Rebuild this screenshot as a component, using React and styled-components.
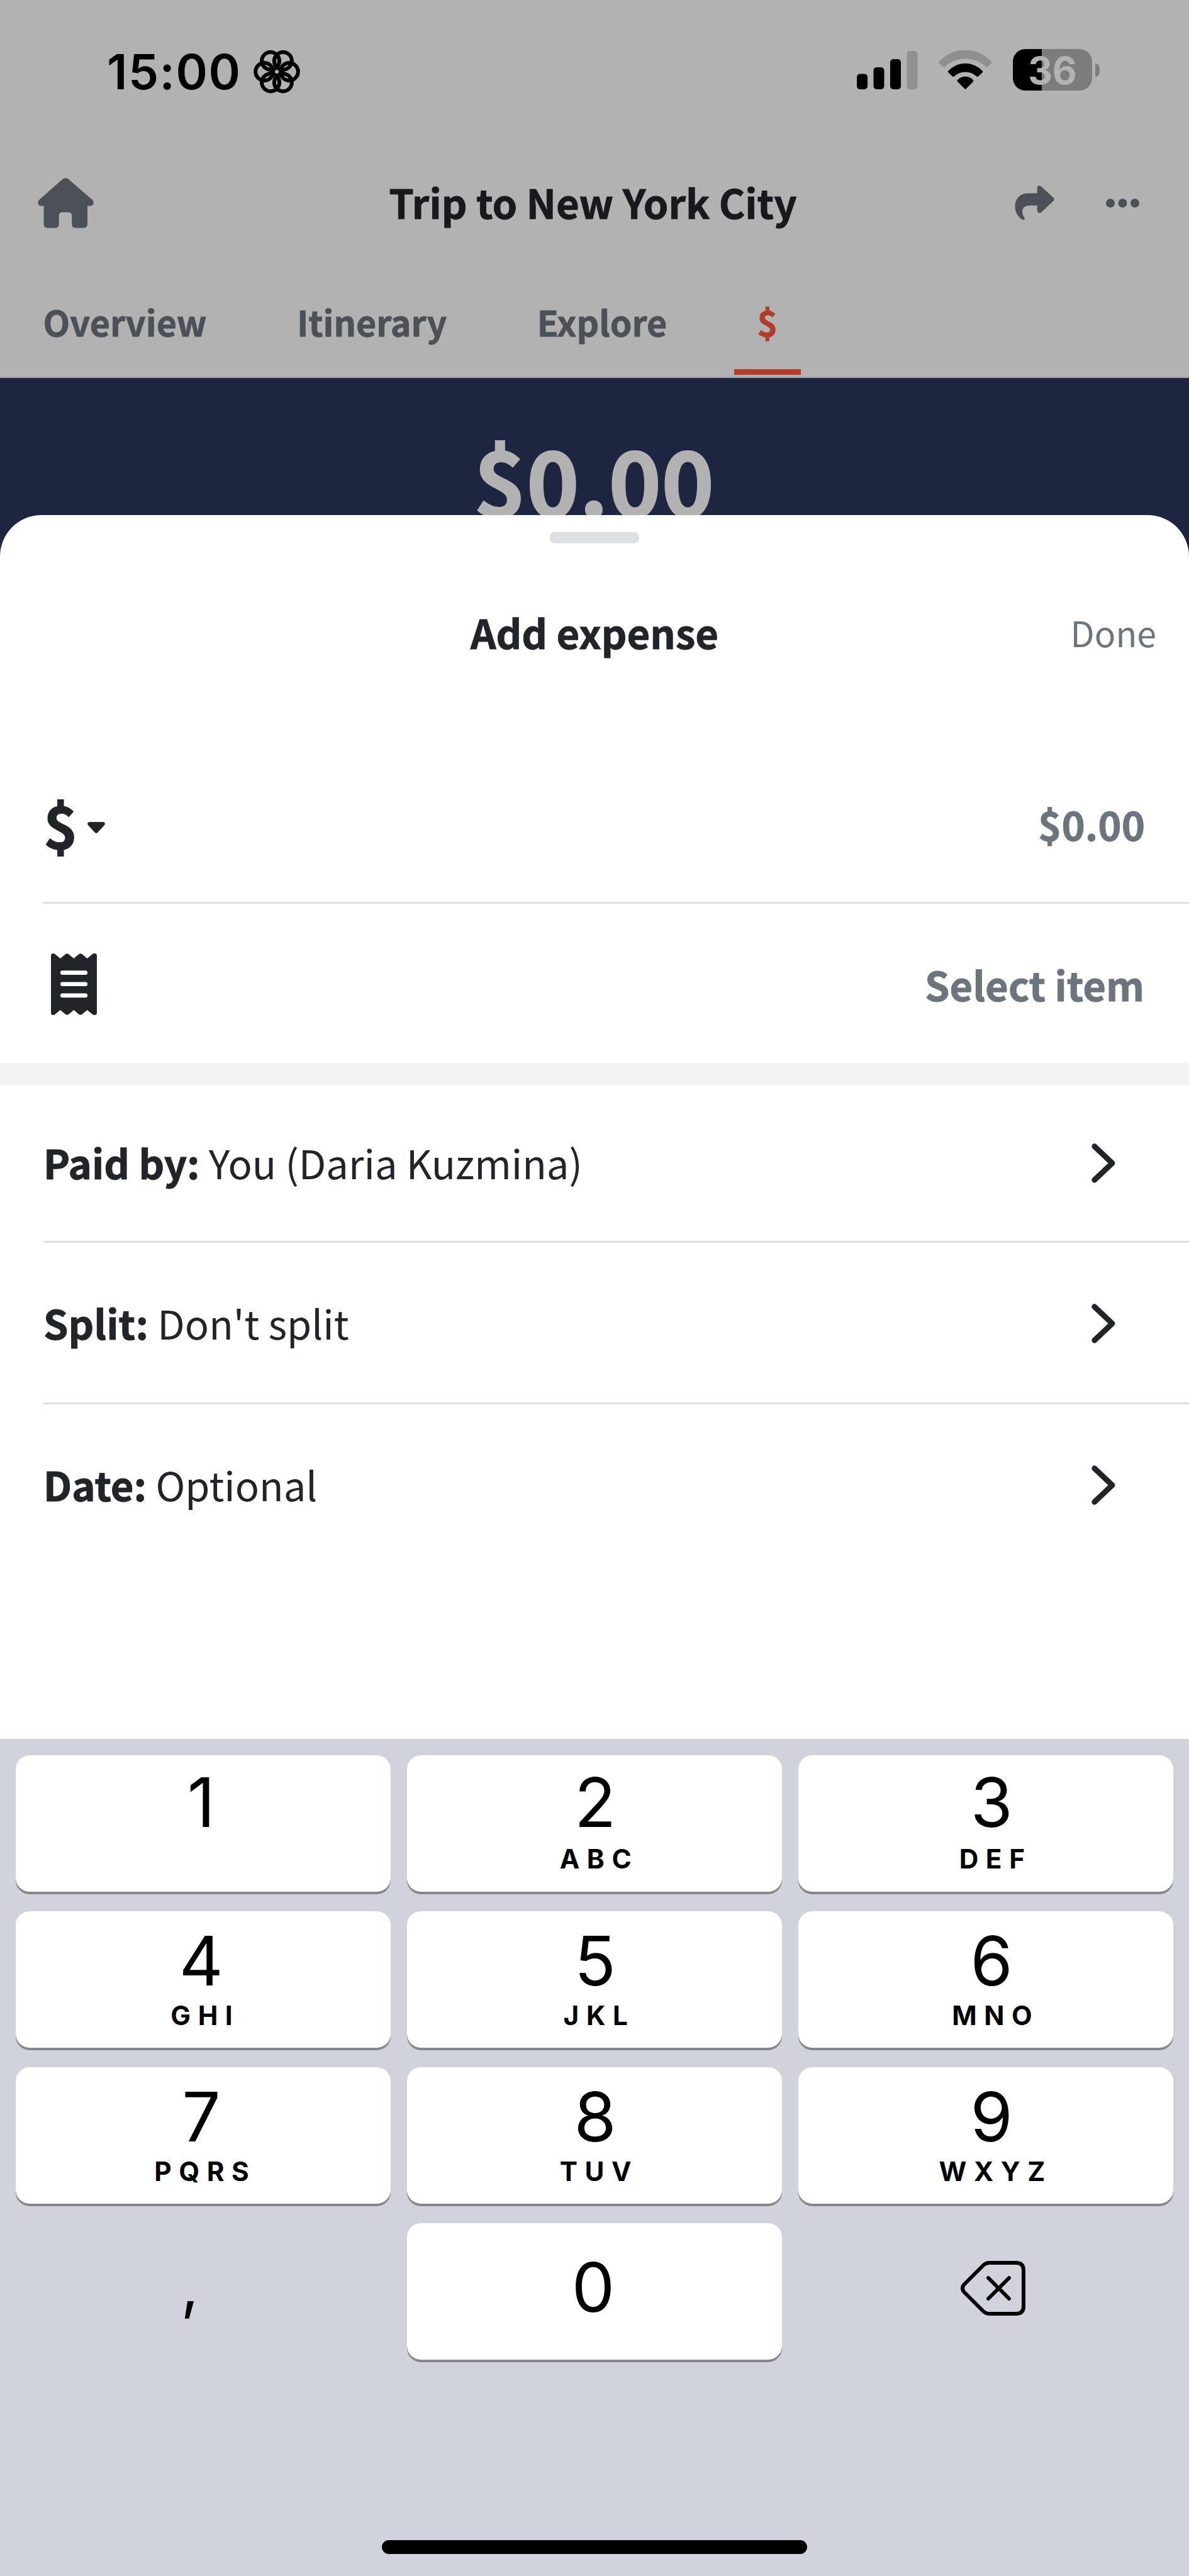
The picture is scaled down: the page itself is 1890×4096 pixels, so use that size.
import React from 'react';
import styled, { createGlobalStyle } from 'styled-components';

const COLOR = {
	dimmed: '#b2b2b2',
	dimmedIcon: '#4b5157',
	dimmedTitle: '#17191c',
	dimmedAccent: '#b03c29',
	navy: '#1e2541',
	text: '#212529',
	muted: '#6c757d',
	line: '#dddee2',
	band: '#f2f3f4',
	keyboard: '#d0d3db',
	keyShadow: '#85878b',
};

const FONT = {
	app: "'Noto Sans CJK JP', 'Noto Sans', sans-serif",
	system: "Inter, 'Liberation Sans', sans-serif",
};

const tabs = ['Overview', 'Itinerary', 'Explore', '$'];

const details = [
	{ label: 'Paid by:', value: 'You (Daria Kuzmina)' },
	{ label: 'Split:', value: "Don't split" },
	{ label: 'Date:', value: 'Optional' },
];

const keys = [
	{ digit: '1', letters: '' },
	{ digit: '2', letters: 'ABC' },
	{ digit: '3', letters: 'DEF' },
	{ digit: '4', letters: 'GHI' },
	{ digit: '5', letters: 'JKL' },
	{ digit: '6', letters: 'MNO' },
	{ digit: '7', letters: 'PQRS' },
	{ digit: '8', letters: 'TUV' },
	{ digit: '9', letters: 'WXYZ' },
];

// optical shift of the labels in each keypad column
const columnShift = [-3, 1, 9];

const App = () => {
	return (
		<>
			<GlobalStyle />
			<Screen>
				<StatusBar>
					<Clock>
						<span>15:00</span>
						<FocusIcon />
					</Clock>
					<Indicators>
						<SignalIcon />
						<WifiIcon />
						<Battery>
							<BatteryBody>36</BatteryBody>
							<BatteryNub />
						</Battery>
					</Indicators>
				</StatusBar>
				<NavBar>
					<HomeIcon />
					<NavTitle>Trip to New York City</NavTitle>
					<NavActions>
						<ShareIcon />
						<MoreIcon />
					</NavActions>
				</NavBar>
				<Tabs>
					{tabs.map((tab) => (
						<Tab key={tab} $active={tab === '$'}>
							{tab}
						</Tab>
					))}
				</Tabs>
				<Hero>$0.00</Hero>
				<Sheet>
					<Handle />
					<SheetHeader>
						<SheetTitle>Add expense</SheetTitle>
						<DoneButton>Done</DoneButton>
					</SheetHeader>
					<AmountRow>
						<Currency>
							$
							<CaretIcon />
						</Currency>
						<Placeholder>$0.00</Placeholder>
					</AmountRow>
					<ItemRow>
						<ReceiptIcon />
						<Placeholder>Select item</Placeholder>
					</ItemRow>
					<Band />
					{details.map(({ label, value }, index) => (
						<DetailRow key={label} $first={index === 0} $last={index === details.length - 1}>
							<p>
								<b>{label}</b> {value}
							</p>
							<ChevronIcon />
						</DetailRow>
					))}
				</Sheet>
				<Keyboard>
					<Keypad>
						{keys.map(({ digit, letters }, index) => (
							<Key key={digit} $top={index < 3 ? 21 : 25} $shift={columnShift[index % 3]}>
								<Digit>{digit}</Digit>
								<Letters $gap={index < 3 ? 14 : 11}>{letters}</Letters>
							</Key>
						))}
						<PlainKey $shift={-21}>
							<Comma>,</Comma>
						</PlainKey>
						<Key $top={48} $shift={-2}>
							<Digit>0</Digit>
						</Key>
						<PlainKey $shift={11}>
							<BackspaceIcon />
						</PlainKey>
					</Keypad>
					<HomeIndicator />
				</Keyboard>
			</Screen>
		</>
	);
};

export default App;

const FocusIcon = () => {
	return (
		<svg width="74" height="74" viewBox="-37 -37 74 74" fill="none" stroke="#000" strokeWidth="6">
			{[0, 60, 120, 180, 240, 300].map((angle) => (
				<circle key={angle} cx="19.8" cy="0" r="14" transform={`rotate(${angle})`} />
			))}
		</svg>
	);
};

const SignalIcon = () => {
	return (
		<svg width="97" height="61" viewBox="0 0 97 61">
			<rect x="0" y="36.6" width="17" height="24.4" rx="5" />
			<rect x="26.5" y="26" width="17" height="35" rx="5" />
			<rect x="53" y="13" width="17" height="48" rx="5" />
			<rect x="79.5" y="0" width="17" height="61" rx="5" fill="#909090" />
		</svg>
	);
};

const WifiIcon = () => {
	return (
		<svg width="85" height="62" viewBox="20 58 316 232">
			<path
				fill="#8f8f8f"
				d="M22 126A209 209 0 0 1 334 126Q338 130 334 134L310 156Q306 160 301 156A181 181 0 0 0 55 156Q50 160 46 156L22 134Q18 130 22 126Z"
			/>
			<path d="M76 181A137 137 0 0 1 280 181Q284 185 280 190L254 213Q250 217 245 213A99 99 0 0 0 111 213Q106 217 102 213L76 190Q72 185 76 181Z" />
			<path d="M132 235A60 60 0 0 1 224 235Q228 240 224 245L182 287Q178 291 174 287L132 245Q128 240 132 235Z" />
		</svg>
	);
};

const HomeIcon = () => {
	return (
		<svg width="89" height="80" viewBox="0 0 89 80" fill={COLOR.dimmedIcon}>
			<path d="M39.5 2Q44.3 -2 49 2L86.5 34.5Q89.5 38 88.3 41.5Q87 44.5 83 44.5H79V73Q79 79.5 72.5 79.5H60.5Q54.2 79.5 54.2 73V60Q54.2 54.5 48.7 54.5H39.3Q33.7 54.5 33.7 60V73Q33.7 79.5 27.5 79.5H16Q9.6 79.5 9.6 73V44.5H6Q2 44.5 .7 41.5Q-.5 38 2.5 34.5Z" />
		</svg>
	);
};

const ShareIcon = () => {
	return (
		<svg width="63" height="55" viewBox="50 67 235 205" fill={COLOR.dimmedIcon}>
			<path d="M183 113V82Q183 71 193 68Q200 66 208 73L279 139Q288 148 279 158L208 225Q200 232 192 229Q183 226 183 216V185H140C110 185 95 200 95 222C95 238 101 246 107 257C113 268 102 275 93 268C66 250 52 222 52 190C52 145 84 113 130 113Z" />
		</svg>
	);
};

const MoreIcon = () => {
	return (
		<svg width="53" height="14" viewBox="0 0 53 14" fill={COLOR.dimmedIcon}>
			<circle cx="7" cy="7" r="7" />
			<circle cx="26.5" cy="7" r="7" />
			<circle cx="46" cy="7" r="7" />
		</svg>
	);
};

const CaretIcon = () => {
	return (
		<svg width="28" height="18" viewBox="0 0 28 18" fill={COLOR.text}>
			<path d="M3.5 0H24.5Q27 0 27.7 1.8Q28.3 3.6 26.8 5.2L16.5 16.5Q14 19 11.5 16.5L1.2 5.2Q-.3 3.6 .3 1.8Q1 0 3.5 0Z" />
		</svg>
	);
};

const ReceiptIcon = () => {
	return (
		<svg width="73" height="98" viewBox="0 0 73 98">
			<path
				fill={COLOR.text}
				d="M0 3.5Q0 0 3.8 0Q5.8 0 7 1.5L14.8 8L23 1.2Q25.6 -.8 28.2 1.2L36.3 8L44.3 1.2Q46.9 -.8 49.5 1.2L57.7 8L65.8 1.2Q67.3 0 69.2 0Q73 0 73 3.5V94.5Q73 98 69.2 98Q67.3 98 65.8 96.8L57.7 90L49.5 96.8Q46.9 98.8 44.3 96.8L36.3 90L28.2 96.8Q25.6 98.8 23 96.8L14.8 90L7 96.5Q5.8 98 3.8 98Q0 98 0 94.5Z"
			/>
			<g fill="#fff">
				<rect x="15" y="27.3" width="43" height="6.6" rx="3" />
				<rect x="15" y="45.5" width="43" height="6.6" rx="3" />
				<rect x="15" y="63.6" width="43" height="6.6" rx="3" />
			</g>
		</svg>
	);
};

const ChevronIcon = () => {
	return (
		<svg
			width="38"
			height="63"
			viewBox="0 0 38 63"
			fill="none"
			stroke={COLOR.text}
			strokeWidth="8.8"
			strokeLinecap="round"
			strokeLinejoin="round"
		>
			<path d="M4.7 4.7L33 31.5L4.7 58.3" />
		</svg>
	);
};

const BackspaceIcon = () => {
	return (
		<svg
			width="103"
			height="87"
			viewBox="0 0 103 87"
			fill="none"
			stroke="#000"
			strokeWidth="6"
			strokeLinecap="round"
			strokeLinejoin="round"
		>
			<path d="M46 3H88Q100 3 100 15V72Q100 84 88 84H46Q40 84 36 80L5.5 49.5Q.5 43.5 5.5 37.5L36 7Q40 3 46 3Z" />
			<path d="M44 27L77 60M77 27L44 60" />
		</svg>
	);
};

const GlobalStyle = createGlobalStyle`
	* {
		box-sizing: border-box;
	}

	body {
		margin: 0;
		background-color: ${COLOR.keyboard};
	}

	p,
	h1,
	h2 {
		margin: 0;
		font-weight: 700;
	}

	svg {
		display: block;
		flex-shrink: 0;
	}
`;

const Screen = styled.div`
	display: flex;
	flex-direction: column;
	width: 1890px;
	height: 4096px;
	overflow: hidden;
	background-color: ${COLOR.dimmed};
	font-family: ${FONT.app};
	color: ${COLOR.text};
`;

const StatusBar = styled.div`
	display: flex;
	justify-content: space-between;
	align-items: center;
	flex-shrink: 0;
	height: 227px;
	padding: 0 142px 0 170px;
	font-family: ${FONT.system};
	color: #000;
`;

const Clock = styled.div`
	display: flex;
	align-items: center;
	gap: 19px;
	font-size: 76.6px;
	font-weight: 600;
	line-height: 90px;
	letter-spacing: 1.5px;
`;

const Indicators = styled.div`
	display: flex;
	align-items: center;
	gap: 33px;
	margin-bottom: 5px;
`;

const Battery = styled.div`
	display: flex;
	align-items: center;
	gap: 4.5px;
`;

const BatteryBody = styled.div`
	width: 126px;
	height: 66px;
	padding-top: 1px;
	border-radius: 20px;
	background: linear-gradient(to right, #000 46px, #7c7c7c 46px);
	font-size: 60px;
	font-weight: 700;
	line-height: 66px;
	text-align: center;
	color: ${COLOR.dimmed};
`;

const BatteryNub = styled.div`
	width: 7.5px;
	height: 21px;
	border-radius: 0 8px 8px 0 / 0 10px 10px 0;
	background-color: #7c7c7c;
`;

const NavBar = styled.header`
	display: grid;
	grid-template-columns: 1fr auto 1fr;
	align-items: center;
	flex-shrink: 0;
	height: 186px;
	padding: 0 79px 0 60px;

	svg {
		margin-top: 5px;
	}
`;

const NavTitle = styled.h1`
	margin-right: -14px;
	font-size: 63.4px;
	line-height: 80px;
	color: ${COLOR.dimmedTitle};
	-webkit-text-stroke: 0.014em;
`;

const NavActions = styled.div`
	display: flex;
	justify-content: flex-end;
	align-items: center;
	gap: 82.5px;
`;

const Tabs = styled.nav`
	display: flex;
	gap: 70.5px;
	flex-shrink: 0;
	height: 188px;
	padding-left: 32px;
	border-bottom: 2px solid #a3a7ad;
`;

const Tab = styled.div`
	height: 183px;
	padding: 22px 36.4px 0;
	border-bottom: 9.5px solid ${({ $active }) => ($active ? COLOR.dimmedAccent : 'transparent')};
	font-size: 55.5px;
	font-weight: 700;
	line-height: 152px;
	color: ${({ $active }) => ($active ? COLOR.dimmedAccent : COLOR.dimmedIcon)};
	-webkit-text-stroke: 0.014em;
`;

const Hero = styled.div`
	flex-shrink: 0;
	height: 285px;
	padding: 60px 2px 0 0;
	background-color: ${COLOR.navy};
	font-size: 142.5px;
	font-weight: 700;
	line-height: 199px;
	text-align: center;
	color: ${COLOR.dimmed};
	-webkit-text-stroke: 0.014em;
`;

const Sheet = styled.main`
	display: flex;
	flex-direction: column;
	flex-shrink: 0;
	height: 1946px;
	margin-top: -67px;
	padding-top: 27px;
	border-radius: 66px 66px 0 0;
	background-color: #fff;
`;

const Handle = styled.div`
	align-self: center;
	width: 142px;
	height: 18px;
	border-radius: 8px;
	background-color: #dde0e5;
`;

const SheetHeader = styled.div`
	display: grid;
	grid-template-columns: 1fr auto 1fr;
	align-items: center;
	height: 282px;
	margin-bottom: 39px;
`;

const SheetTitle = styled.h2`
	grid-column: 2;
	font-size: 63.3px;
	line-height: 80px;
	-webkit-text-stroke: 0.014em;
`;

const DoneButton = styled.button`
	justify-self: end;
	margin-right: 52px;
	padding: 0;
	border: none;
	background: none;
	font-family: inherit;
	font-size: 55.5px;
	line-height: 80px;
	color: ${COLOR.muted};
`;

const Row = styled.div`
	display: flex;
	justify-content: space-between;
	align-items: center;
	flex-shrink: 0;
	margin-left: 69px;
`;

const AmountRow = styled(Row)`
	height: 252px;
	padding-right: 70px;
	border-bottom: 3px solid ${COLOR.line};
`;

const ItemRow = styled(Row)`
	height: 253px;
	padding: 3px 71px 0 12px;
`;

const DetailRow = styled(Row)`
	height: ${({ $first }) => ($first ? 251 : 257)}px;
	padding: ${({ $first }) => ($first ? 1 : 3)}px 117px 0 0;
	border-bottom: 3px solid ${({ $last }) => ($last ? 'transparent' : COLOR.line)};
	font-size: 63.3px;
	line-height: 90px;

	p {
		margin-bottom: 3px;
		font-weight: 400;
	}

	b {
		-webkit-text-stroke: 0.014em;
	}
`;

const Currency = styled.div`
	display: flex;
	align-items: center;
	gap: 15px;
	font-size: 92.5px;
	font-weight: 700;
	line-height: 120px;
	-webkit-text-stroke: 0.014em;

	svg {
		margin-top: 13px;
	}
`;

const Placeholder = styled.p`
	font-size: 63.3px;
	line-height: 90px;
	color: ${COLOR.muted};
	-webkit-text-stroke: 0.014em;
`;

const Band = styled.div`
	flex-shrink: 0;
	height: 35px;
	background-color: ${COLOR.band};
`;

const Keyboard = styled.section`
	display: flex;
	flex-direction: column;
	align-items: center;
	flex: 1;
	padding: 26px 25px 35px;
	background-color: ${COLOR.keyboard};
	font-family: ${FONT.system};
	color: #000;
`;

const Keypad = styled.div`
	display: grid;
	grid-template-columns: repeat(3, 1fr);
	grid-auto-rows: 217.3px;
	gap: 30.6px 26.5px;
	width: 100%;
`;

const Key = styled.div`
	display: flex;
	flex-direction: column;
	align-items: center;
	padding-top: ${({ $top }) => $top}px;
	border-radius: 22px;
	background-color: #fff;
	box-shadow: 0 4px 0 ${COLOR.keyShadow};

	> span {
		transform: translateX(${({ $shift }) => $shift}px);
	}
`;

const PlainKey = styled.div`
	display: flex;
	justify-content: center;
	align-items: center;
	padding-bottom: 9px;

	> * {
		transform: translateX(${({ $shift }) => $shift}px);
	}
`;

const Digit = styled.span`
	font-size: 108.5px;
	line-height: 108px;
`;

const Letters = styled.span`
	height: 44px;
	margin-top: ${({ $gap }) => $gap}px;
	padding-left: 13px;
	font-size: 42.3px;
	font-weight: 700;
	line-height: 44px;
	letter-spacing: 11.6px;
`;

const Comma = styled.span`
	margin-top: -12px;
	font-size: 100px;
	line-height: 108px;
`;

const HomeIndicator = styled.div`
	width: 676px;
	height: 22.5px;
	margin-top: auto;
	border-radius: 11px;
	background-color: #000;
`;
